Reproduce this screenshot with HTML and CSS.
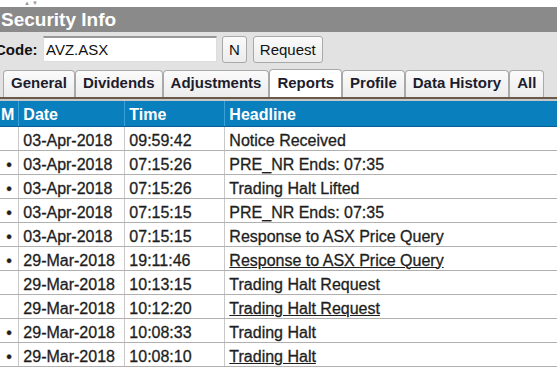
FILE: index.html
```html
<!DOCTYPE html>
<html lang="en">
<head>
    <meta charset="UTF-8">
    <title>Security Info</title>
    <link rel="stylesheet" href="styles.css">
</head>
<body>
    <div id="panel">
        <div class="sorter"><span>&#9650;</span><span>&#9660;</span></div>
        <div class="title-bar">Security Info</div>
        <div class="toolbar">
            <div class="code-row">
                <label for="code">Code:</label>
                <input type="text" id="code" value="AVZ.ASX">
                <button class="btn">N</button>
                <button class="btn">Request</button>
            </div>
            <div class="tabs">
                <div class="tab">General</div>
                <div class="tab">Dividends</div>
                <div class="tab">Adjustments</div>
                <div class="tab active">Reports</div>
                <div class="tab">Profile</div>
                <div class="tab">Data History</div>
                <div class="tab">All</div>
            </div>
        </div>
        <table id="reports">
            <thead>
                <tr><th class="col-m">M</th><th class="col-date">Date</th><th class="col-time">Time</th><th>Headline</th></tr>
            </thead>
            <tbody>
                <tr><td></td><td>03-Apr-2018</td><td>09:59:42</td><td>Notice Received</td></tr>
                <tr><td>&bull;</td><td>03-Apr-2018</td><td>07:15:26</td><td>PRE_NR Ends: 07:35</td></tr>
                <tr><td>&bull;</td><td>03-Apr-2018</td><td>07:15:26</td><td>Trading Halt Lifted</td></tr>
                <tr><td>&bull;</td><td>03-Apr-2018</td><td>07:15:15</td><td>PRE_NR Ends: 07:35</td></tr>
                <tr><td>&bull;</td><td>03-Apr-2018</td><td>07:15:15</td><td>Response to ASX Price Query</td></tr>
                <tr><td>&bull;</td><td>29-Mar-2018</td><td>19:11:46</td><td><a href="#">Response to ASX Price Query</a></td></tr>
                <tr><td></td><td>29-Mar-2018</td><td>10:13:15</td><td>Trading Halt Request</td></tr>
                <tr><td></td><td>29-Mar-2018</td><td>10:12:20</td><td><a href="#">Trading Halt Request</a></td></tr>
                <tr><td>&bull;</td><td>29-Mar-2018</td><td>10:08:33</td><td>Trading Halt</td></tr>
                <tr><td>&bull;</td><td>29-Mar-2018</td><td>10:08:10</td><td><a href="#">Trading Halt</a></td></tr>
            </tbody>
        </table>
    </div>
</body>
</html>
```

FILE: styles.css
```css
body {
    margin: 0;
    font-family: "Liberation Sans", Arial, sans-serif;
    background: #fff;
    overflow: hidden;
}
#panel {
    margin-left: -5px;
    width: 562px;
}
.sorter {
    height: 7px;
    padding-left: 29px;
    font-size: 6px;
    line-height: 6px;
    color: #999;
    display: flex;
    gap: 2px;
}
.title-bar {
    height: 25px;
    background: #8a8a8a;
    color: #fff;
    font-weight: bold;
    font-size: 19px;
    line-height: 25px;
    padding-left: 6px;
}
.toolbar {
    background: #e2e2e2;
    padding-top: 3px;
}
.code-row {
    display: flex;
    align-items: center;
    height: 28px;
}
.code-row label {
    font-weight: bold;
    font-size: 15px;
    color: #111;
    width: 48px;
}
.code-row input {
    width: 174px;
    height: 26px;
    box-sizing: border-box;
    border: 1px solid #ddd;
    border-top: 2px solid #999;
    background: #fff;
    font-family: "Liberation Sans", Arial, sans-serif;
    font-size: 15px;
    color: #111;
    padding: 0 2px;
    margin: 0 5px 0 0;
    outline: none;
}
.btn {
    height: 27px;
    margin: 0 6px 0 0;
    padding: 0 6px;
    font-family: "Liberation Sans", Arial, sans-serif;
    font-size: 15px;
    color: #111;
    background: linear-gradient(#fafafa, #ececec);
    border: 1px solid #a9a9a9;
    border-radius: 3px;
}
.tabs {
    display: flex;
    padding: 6px 0 0 8px;
    border-bottom: 2px solid #6b5a4a;
    height: 28px;
}
.tab {
    font-weight: bold;
    font-size: 15px;
    color: #1c1c2c;
    padding: 0 7px 3px;
    line-height: 24px;
    margin-top: 1px;
    background: linear-gradient(#fbfbfb, #ececec);
    border: 1px solid #a9a9a9;
    border-bottom: none;
    border-radius: 4px 4px 0 0;
}
.tab.active {
    background: #fff;
    margin-top: 0;
    padding-top: 1px;
}
#reports {
    width: 100%;
    border-collapse: collapse;
    border-top: 2px solid #c8c8c8;
    font-size: 16px;
}
#reports th {
    background: #0a7fbd;
    color: #fff;
    text-align: left;
    font-weight: bold;
    height: 22px;
    line-height: 18px;
    padding: 3px 4px 0;
    border-top: 1px solid #06609a;
    border-bottom: 1px solid #06609a;
    border-left: 1px solid #3aa0d8;
}
#reports td {
    height: 19px;
    line-height: 18px;
    padding: 4px 4px 0;
    color: #1e1e1e;
    -webkit-text-stroke: 0.3px #1e1e1e;
    border-bottom: 1px solid #b0b0b0;
    border-left: 1px solid #c8c8c8;
    white-space: nowrap;
}
#reports th:first-child,
#reports td:first-child {
    border-left: none;
    padding-left: 6px;
}
#reports td:first-child {
    text-align: center;
    padding-left: 9px;
}
.col-m { width: 13px; }
.col-date { width: 97px; }
.col-time { width: 91px; }
#reports a {
    color: #1e1e1e;
}
```
